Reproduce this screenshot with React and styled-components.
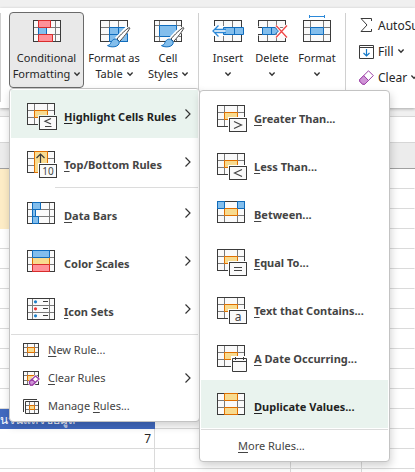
import React from "react";
import styled, { createGlobalStyle, css } from "styled-components";

const Global = createGlobalStyle`
  * { box-sizing: border-box; }
  html, body { margin: 0; height: 100%; overflow: hidden; }
  #root { height: 100%; }
  body { font-family: "Noto Sans", "Open Sans", sans-serif; font-size: 12px; color: #262626; background: #fff; }
  button { font: inherit; color: inherit; border: 0; background: none; padding: 0; margin: 0; text-align: left; }
  svg { display: block; flex: none; overflow: visible; }
`;

const Page = styled.div`
  position: relative;
  display: flex;
  flex-direction: column;
  min-height: 100%;
  overflow: hidden;
  background: #f0f0f0;
`;

const Ribbon = styled.header`
  display: flex;
  align-items: flex-start;
  height: 100px;
  margin-top: 8px;
  padding-top: 4px;
  background: #fff;
  box-shadow: 0 1px 3px rgba(0, 0, 0, 0.3);
`;

const Divider = styled.span`
  flex: none;
  width: 1px;
  height: 89px;
  margin-top: 1px;
  background: #d0d0d0;
`;

const Group = styled.div`
  display: flex;
  flex: none;
  width: ${(p) => p.$width}px;
  padding-left: ${(p) => p.$pad}px;
`;

const BigButton = styled.button`
  && {
    display: flex;
    flex-direction: column;
    align-items: center;
    width: ${(p) => p.$width}px;
    height: 76px;
    padding-top: 7px;
    font-size: 11px;
    line-height: 16px;
    text-align: center;
    white-space: nowrap;
    border: 1px solid ${(p) => (p.$open ? "#6a6a6a" : "transparent")};
    border-radius: 4px;
    background: ${(p) => (p.$open ? "#e9e9e9" : "transparent")};
  }
`;

const BigLabel = styled.span`
  display: flex;
  flex-direction: column;
  align-items: center;
  margin-top: 8px;
`;

const LabelLine = styled.span`
  display: flex;
  align-items: center;
  gap: 4px;
  min-height: 16px;
`;

const Commands = styled.div`
  display: flex;
  flex: 1;
  min-width: 0;
  flex-direction: column;
  padding-left: 13px;
  overflow: hidden;
`;

const Command = styled.button`
  && {
    display: flex;
    align-items: center;
    gap: 4px;
    height: 26px;
    white-space: nowrap;
  }
`;

const FormulaBar = styled.div`
  height: 26px;
  margin-top: 8px;
  background: #fff;
  border-top: 1px solid #d6d6d6;
`;

const HeaderBand = styled.div`
  height: 27px;
  background: #ececec;
  border-top: 1px solid #d6d6d6;
  border-bottom: 1px solid #a0a0a0;
`;

const Sheet = styled.table`
  width: 100%;
  table-layout: fixed;
  border-collapse: separate;
  border-spacing: 0;
  background: #fff;
`;

const Cell = styled.td`
  height: 20px;
  padding: 0 3px;
  line-height: 19px;
  text-align: right;
  white-space: nowrap;
  border-bottom: 1px solid #dadada;
  border-right: 1px solid ${(p) => (p.$line ? "#dadada" : "transparent")};
  ${(p) => p.$cream && css`background: #fdecc6; border-color: #fdecc6;`}
`;

const TitleCell = styled(Cell)`
  && {
    padding: 3px 0 0;
    background: #4169bf;
    border-color: #4169bf;
    color: #fff;
    line-height: 16px;
    text-align: left;
  }
`;

const Menu = styled.nav`
  position: absolute;
  left: ${(p) => p.$left}px;
  top: ${(p) => p.$top}px;
  width: 191px;
  padding: 1px;
  display: flex;
  flex-direction: column;
  font-size: 11px;
  background: #fff;
  border: 1px solid #c3c3c3;
  border-radius: 4px;
  box-shadow: 1px 4px 9px rgba(0, 0, 0, 0.18);
`;

const LargeItem = styled.button`
  && {
    display: flex;
    align-items: center;
    height: 48px;
    padding-left: 16px;
    padding-right: 7px;
    font-weight: 700;
    color: ${(p) => (p.$active ? "#222" : "#444")};
    background: ${(p) => (p.$active ? "#e9f3ee" : "transparent")};
  }
`;

const SmallItem = styled.button`
  && {
    display: flex;
    align-items: center;
    height: ${(p) => (p.$iconless ? 29 : 28)}px;
    padding-left: ${(p) => (p.$iconless ? 37 : 12)}px;
    padding-right: 7px;
    color: #444;
  }
`;

const ItemText = styled.span`
  flex: 1;
  padding-left: ${(p) => p.$gap}px;
  padding-top: ${(p) => p.$drop || 0}px;
  line-height: 16px;
  white-space: nowrap;
  u { text-underline-offset: 2px; text-decoration-thickness: 1px; text-decoration-skip-ink: none; }
`;

const Rule = styled.hr`
  width: auto;
  height: 1px;
  margin: 1px 0 1px ${(p) => p.$inset || 0}px;
  border: 0;
  background: #dcdcdc;
`;

const INK = "#3b3b3b";
const GREY = "#7a7a7a";
const BLUE = "#0f6cbd";
const SKY = "#83beec";
const ORANGE = "#e07000";
const SAND = "#f8db8f";
const RED = "#d92c2c";
const PINK = "#ff9199";

function Frame({ vx = [7.5, 20.5], w = 28, h = 22, hy = [7.5, 14.5], children }) {
  return (
    <svg width={w} height={h} viewBox={`0 0 ${w} ${h}`} fill="none" aria-hidden="true">
      <rect x=".5" y=".5" width={w - 1} height={h - 1} fill="#fafafa" />
      <path stroke={GREY} d={vx.map((x) => `M${x} 0V${h}`).join("") + hy.map((y) => `M0 ${y}H${w}`).join("")} />
      <rect x=".5" y=".5" width={w - 1} height={h - 1} stroke={INK} />
      {children}
    </svg>
  );
}

const Badge = ({ bg = "#fff", children }) => (
  <g>
    <path fill={bg} d="M11 12H28V13H31V28H11Z" />
    <rect x="12.5" y="13.5" width="17" height="13" fill="#fafafa" stroke={INK} />
    {children}
  </g>
);

const Chevron = () => (
  <svg width="6" height="4" viewBox="0 0 6 4" fill="none" stroke="#333" strokeWidth="1.4" aria-hidden="true">
    <path d="M.4.6 3 3.2 5.6.6" />
  </svg>
);

const Arrow = () => (
  <svg width="6" height="10" viewBox="0 0 6 10" fill="none" stroke="#333" strokeWidth="1.2" aria-hidden="true">
    <path d="M.5.5 5 5 .5 9.5" />
  </svg>
);

const Brush = () => (
  <g>
    <path d="M28.5 8 17 20" stroke="#fff" strokeWidth="6" />
    <path d="M29.3 7.5C27 8.6 20 15 17 19L19.5 21.5C23 18 28.5 11 29.8 8.2Z" fill="#fff" stroke={INK} />
    <path d="M16.5 19.3C13 18.5 11.5 21 10.5 23.5 9.8 25 8.5 25.3 7.5 25.6 11 27.8 20 27.5 19.2 21.5Z" fill={SKY} stroke={BLUE} />
  </g>
);

const CondIcon = () => (
  <Frame vx={[5.5, 22.5]}>
    <path d="M5.5.5H17.5V7.5H5.5ZM5.5 14.5H19.5V21.5H5.5Z" fill={PINK} stroke={RED} />
    <path d="M5.5 7.5H13.5V14.5H5.5Z" fill={SKY} stroke={BLUE} />
    <path d="M5.5 7.5H17M5.5 14.5H19" stroke={RED} />
  </Frame>
);

const TableIcon = () => (
  <Frame vx={[9.5, 18.5]}>
    <path d="M9.5 7.5H27.5V21.5H9.5ZM18.5 7V22M9 14.5H28" fill={SKY} stroke={BLUE} />
    <Brush />
  </Frame>
);

const StylesIcon = () => (
  <Frame vx={[5.5, 22.5]} hy={[5.5, 16.5]}>
    <path d="M5.5 5.5H22.5V16.5H5.5Z" fill={SKY} stroke={BLUE} />
    <Brush />
  </Frame>
);

const InsertIcon = () => (
  <Frame vx={[9.5, 18.5]}>
    <path d="M-1 6H10V16H-1Z" fill="#fff" />
    <path d="M9.5 7.5H29.5V14.5H9.5ZM20.5 7V15" fill={SKY} stroke={BLUE} />
    <path d="M11.5 9V13H3V9Z" fill="#fff" />
    <path d="M12 9.5H1M12 12.5H1M4.5 5.5-1 11 4.5 16.5" stroke="#2b88d8" strokeWidth="1.3" />
  </Frame>
);

const DeleteIcon = () => (
  <Frame vx={[9.5, 18.5]}>
    <path d="M-1 6.5H4V15.5H-1Z M20 8H29V15H20Z" fill="#fff" />
    <path d="M0 7.500H4M0 14.500H4" stroke={INK} />
    <path d="M4.5 7.5H17L20.5 11 17 14.5H4.5ZM13.5 7V15" fill={SKY} stroke={BLUE} />
    <path d="M18 5.5 29 17.5M29 5.5 18 17.5" stroke="#fff" strokeWidth="3" />
    <path d="M18 5.5 29 17.5M29 5.5 18 17.5" stroke="#f04848" strokeWidth="1.3" />
  </Frame>
);

const FormatIcon = () => (
  <Frame>
    <path d="M7.5 7.5H20.5V14.5H7.5Z" fill={SKY} stroke={BLUE} />
    <path d="M6.5-5V-2M21.5-5V-2M6.5-3.5H21.5" stroke="#2b88d8" />
  </Frame>
);

const SumIcon = () => (
  <svg width="15" height="16" viewBox="0 0 15 16" fill="none" stroke={INK} aria-hidden="true">
    <path d="M12.5 4V1.5H2L8 8 2 14.5H12.5V12" />
  </svg>
);

const FillIcon = () => (
  <svg width="15" height="15" viewBox="0 0 15 15" fill="none" aria-hidden="true">
    <path d="M.5 1.5H14.5V14.5H.5ZM.5 3.5H14.5" stroke={INK} />
    <path d="M7.5 5V12M4.5 9 7.5 12 10.5 9" stroke="#1479c9" strokeWidth="1.2" />
  </svg>
);

const EraserIcon = () => (
  <svg width="15" height="15" viewBox="0 0 15 15" fill="none" stroke="#9b3fa6" aria-hidden="true">
    <path d="M9.5.8 14.3 5.6 5.8 14.2H3.5L.7 11.2V9.6Z" fill="#fff" />
    <path d="M4.7 5.6 9.5 10.5 5.8 14.2H3.5L.7 11.2V9.6Z" fill="#cf93d6" />
  </svg>
);

const orangeCell = <path d="M7.5 7.5H20.5V14.5H7.5Z" fill={SAND} stroke={ORANGE} />;

const SYMBOLS = {
  gt: "M17 16.5 24.5 20 17 23.5",
  lt: "M25 16.5 17.5 20 25 23.5",
  eq: "M17 18.5H25M17 21.5H25",
  le: "M24 15.5 18 18.3 24 21M18 23.5H24.5",
};

const CompareIcon = ({ symbol, letter, bg }) => (
  <Frame>
    {orangeCell}
    <Badge bg={bg}>
      {letter ? (
        <text x="21" y="24" textAnchor="middle" fontSize="12" fontWeight="400" fill="#444">{letter}</text>
      ) : (
        <path d={SYMBOLS[symbol]} stroke="#444" strokeWidth="1.2" />
      )}
    </Badge>
  </Frame>
);

const TopIcon = () => (
  <Frame>
    <path d="M7.5.5H20.5V21.5H7.5Z" fill={SAND} stroke={ORANGE} />
    <path d="M13.5 13V3M9.5 7 13.5 3 17.5 7" stroke={INK} strokeWidth="1.2" />
    <Badge>
      <text x="21" y="24" textAnchor="middle" fontSize="10" fontWeight="400" fill="#444">10</text>
    </Badge>
  </Frame>
);

const BarsIcon = () => (
  <Frame vx={[5.5, 22.5]}>
    <path d="M5.5.5H13.5V7.5H8.5V14.5H11.5V21.5H5.5ZM5.5 7.5H9M5.5 14.5H9" fill={SKY} stroke={BLUE} />
  </Frame>
);

const ScalesIcon = () => (
  <Frame vx={[5.5, 22.5]}>
    <path d="M5.5 7.5H22.5V14.5H5.5Z" fill={SAND} stroke={ORANGE} />
    <path d="M5.5.5H22.5V7.5H5.5Z" fill={SKY} stroke={BLUE} />
    <path d="M5.5 14.5H22.5V21.5H5.5Z" fill={PINK} stroke={RED} />
  </Frame>
);

const SetsIcon = () => (
  <Frame vx={[5.5, 22.5]}>
    <path d="M16 3.5H21M16 10.5H21M16 17.5H21" stroke={INK} />
    <circle cx="8.5" cy="3.8" r="1.6" fill="#1e7fc8" />
    <circle cx="8.5" cy="10.8" r="1.6" fill="#ee3535" />
    <circle cx="8.5" cy="17.8" r="1.6" fill="#1e7fc8" />
  </Frame>
);

const BetweenIcon = () => (
  <Frame>
    {orangeCell}
    <path d="M.5.5H7.5V7.5H.5ZM20.5.5H27.5V7.5H20.5Z" fill={SKY} stroke={BLUE} />
  </Frame>
);

const DateIcon = () => (
  <Frame>
    {orangeCell}
    <path d="M14 11H31V28H14Z" fill="#fff" />
    <path d="M15.5 13.5H29.5V26.5H15.5ZM15.5 16.5H29.5M18.5 12V15M26.5 12V15" fill="#fafafa" stroke={INK} />
  </Frame>
);

const DuplicateIcon = () => (
  <Frame>
    <path d="M7.5.5H20.5V7.5H7.5ZM7.5 14.5H20.5V21.5H7.5Z" fill={SAND} stroke={ORANGE} />
  </Frame>
);

const SmallGrid = ({ mode }) => {
  if (mode === "manage") {
    return (
      <svg width="16" height="15" viewBox="0 0 16 15" fill="none" aria-hidden="true">
        <path d="M.5 13V.5H14" stroke={INK} />
        <path d="M2.5 2.5H15.5V14.5H2.5Z" fill="#fafafa" />
        <path d="M6.5 2V15M11.5 2V15M2 6.5H16M2 10.5H16" stroke={GREY} />
        <path d="M2.5 2.5H15.5V14.5H2.5Z" stroke={INK} />
        <path d="M6.5 6.5H11.5V10.5H6.5Z" fill={SAND} stroke={ORANGE} />
      </svg>
    );
  }
  return (
    <Frame w={16} h={14} vx={[4.5, 11.5]} hy={[4.5, 9.5]}>
      <path d="M4.5 4.5H11.5V9.5H4.5Z" fill={SAND} stroke={ORANGE} />
      {mode === "clear" && (
        <g>
          <path d="M12.500 3.500 17.500 8.500 10 15.500H7L5 12.500V10.500Z" fill="#fff" />
          <path d="M12.5 5 16 8 9.5 14H7.5L6.5 12V10.5Z" fill="#fff" stroke="#9b3fa6" strokeWidth="1.3" />
          <path d="M9 8.2 12.300 11.500 9.500 14H7.500L6.500 12V10.500Z" fill="#cf93d6" stroke="#9b3fa6" strokeWidth="1.2" />
        </g>
      )}
    </Frame>
  );
};

const HIGHLIGHT = "#e9f3ee";

const RIBBON_STYLES = [
  { width: 75, icon: <CondIcon />, lines: ["Conditional", "Formatting"], open: true },
  { width: 60, icon: <TableIcon />, lines: ["Format as", "Table"] },
  { width: 48, icon: <StylesIcon />, lines: ["Cell", "Styles"] },
];

const RIBBON_CELLS = [
  { width: 44, icon: <InsertIcon />, lines: ["Insert", ""] },
  { width: 44, icon: <DeleteIcon />, lines: ["Delete", ""] },
  { width: 46, icon: <FormatIcon />, lines: ["Format", ""] },
];

const RULE_KINDS = [
  { icon: <CompareIcon symbol="le" bg={HIGHLIGHT} />, text: ["", "H", "ighlight Cells Rules"], active: true },
  { icon: <TopIcon />, text: ["", "T", "op/Bottom Rules"] },
];

const VISUAL_KINDS = [
  { icon: <BarsIcon />, text: ["", "D", "ata Bars"] },
  { icon: <ScalesIcon />, text: ["Color ", "S", "cales"] },
  { icon: <SetsIcon />, text: ["", "I", "con Sets"] },
];

const COMPARISONS = [
  { icon: <CompareIcon symbol="gt" />, text: ["", "G", "reater Than..."] },
  { icon: <CompareIcon symbol="lt" />, text: ["", "L", "ess Than..."] },
  { icon: <BetweenIcon />, text: ["", "B", "etween..."] },
  { icon: <CompareIcon symbol="eq" />, text: ["", "E", "qual To..."] },
  { icon: <CompareIcon letter="a" />, text: ["", "T", "ext that Contains..."] },
  { icon: <DateIcon />, text: ["", "A", " Date Occurring..."] },
  { icon: <DuplicateIcon />, text: ["", "D", "uplicate Values..."], active: true },
];

const Keyed = ({ text }) => (
  <>{text[0]}<u>{text[1]}</u>{text[2]}</>
);

const RibbonButton = ({ item }) => (
  <BigButton $width={item.width} $open={item.open} aria-expanded={!!item.open}>
    {item.icon}
    <BigLabel>
      <LabelLine>{item.lines[0]}</LabelLine>
      <LabelLine>{item.lines[1]}<Chevron /></LabelLine>
    </BigLabel>
  </BigButton>
);

const MenuItem = ({ item, sub }) => (
  <LargeItem $active={item.active}>
    {item.icon}
    <ItemText $gap={9} $drop={6}><Keyed text={item.text} /></ItemText>
    {!sub && <Arrow />}
  </LargeItem>
);

const ROWS = ["", "", "", "", "", "", "", "", "", "title", "7", "", ""];

export default function App() {
  return (
    <Page>
      <Global />
      <Ribbon>
        <Divider />
        <Group $width={197} $pad={8}>
          {RIBBON_STYLES.map((item) => <RibbonButton key={item.lines[0]} item={item} />)}
        </Group>
        <Divider />
        <Group $width={146} $pad={7}>
          {RIBBON_CELLS.map((item) => <RibbonButton key={item.lines[0]} item={item} />)}
        </Group>
        <Divider />
        <Commands>
          <Command><SumIcon />AutoSum</Command>
          <Command><FillIcon />Fill<Chevron /></Command>
          <Command><EraserIcon />Clear<Chevron /></Command>
        </Commands>
      </Ribbon>
      <FormulaBar />
      <HeaderBand />
      <Sheet>
        <colgroup>
          <col width="155" /><col width="136" /><col width="71" /><col />
        </colgroup>
        <tbody>
          {[0, 1, 2].map((n) => (
            <tr key={n}><Cell $cream /><Cell /><Cell /><Cell /></tr>
          ))}
          {ROWS.map((kind, n) => (
            <tr key={n}>
              {kind === "title" ? <TitleCell>นวนแถวข้อมูล</TitleCell> : <Cell $line={n > 9}>{kind}</Cell>}
              <Cell $line={n > 9} /><Cell $line={n > 9} /><Cell />
            </tr>
          ))}
        </tbody>
      </Sheet>

      <Menu $left={9} $top={88} aria-label="Conditional Formatting">
        {RULE_KINDS.map((item) => <MenuItem key={item.text[2]} item={item} />)}
        <Rule $inset={44} />
        {VISUAL_KINDS.map((item) => <MenuItem key={item.text[2]} item={item} />)}
        <Rule />
        <SmallItem><SmallGrid mode="new" /><ItemText $gap={9}><Keyed text={["", "N", "ew Rule..."]} /></ItemText></SmallItem>
        <SmallItem><SmallGrid mode="clear" /><ItemText $gap={9}><Keyed text={["", "C", "lear Rules"]} /></ItemText><Arrow /></SmallItem>
        <SmallItem><SmallGrid mode="manage" /><ItemText $gap={9}><Keyed text={["Manage ", "R", "ules..."]} /></ItemText></SmallItem>
      </Menu>

      <Menu $left={199} $top={90} aria-label="Highlight Cells Rules">
        {COMPARISONS.map((item) => <MenuItem key={item.text[2]} item={item} sub />)}
        <Rule />
        <SmallItem $iconless><ItemText $gap={0}><Keyed text={["", "M", "ore Rules..."]} /></ItemText></SmallItem>
      </Menu>
    </Page>
  );
}
